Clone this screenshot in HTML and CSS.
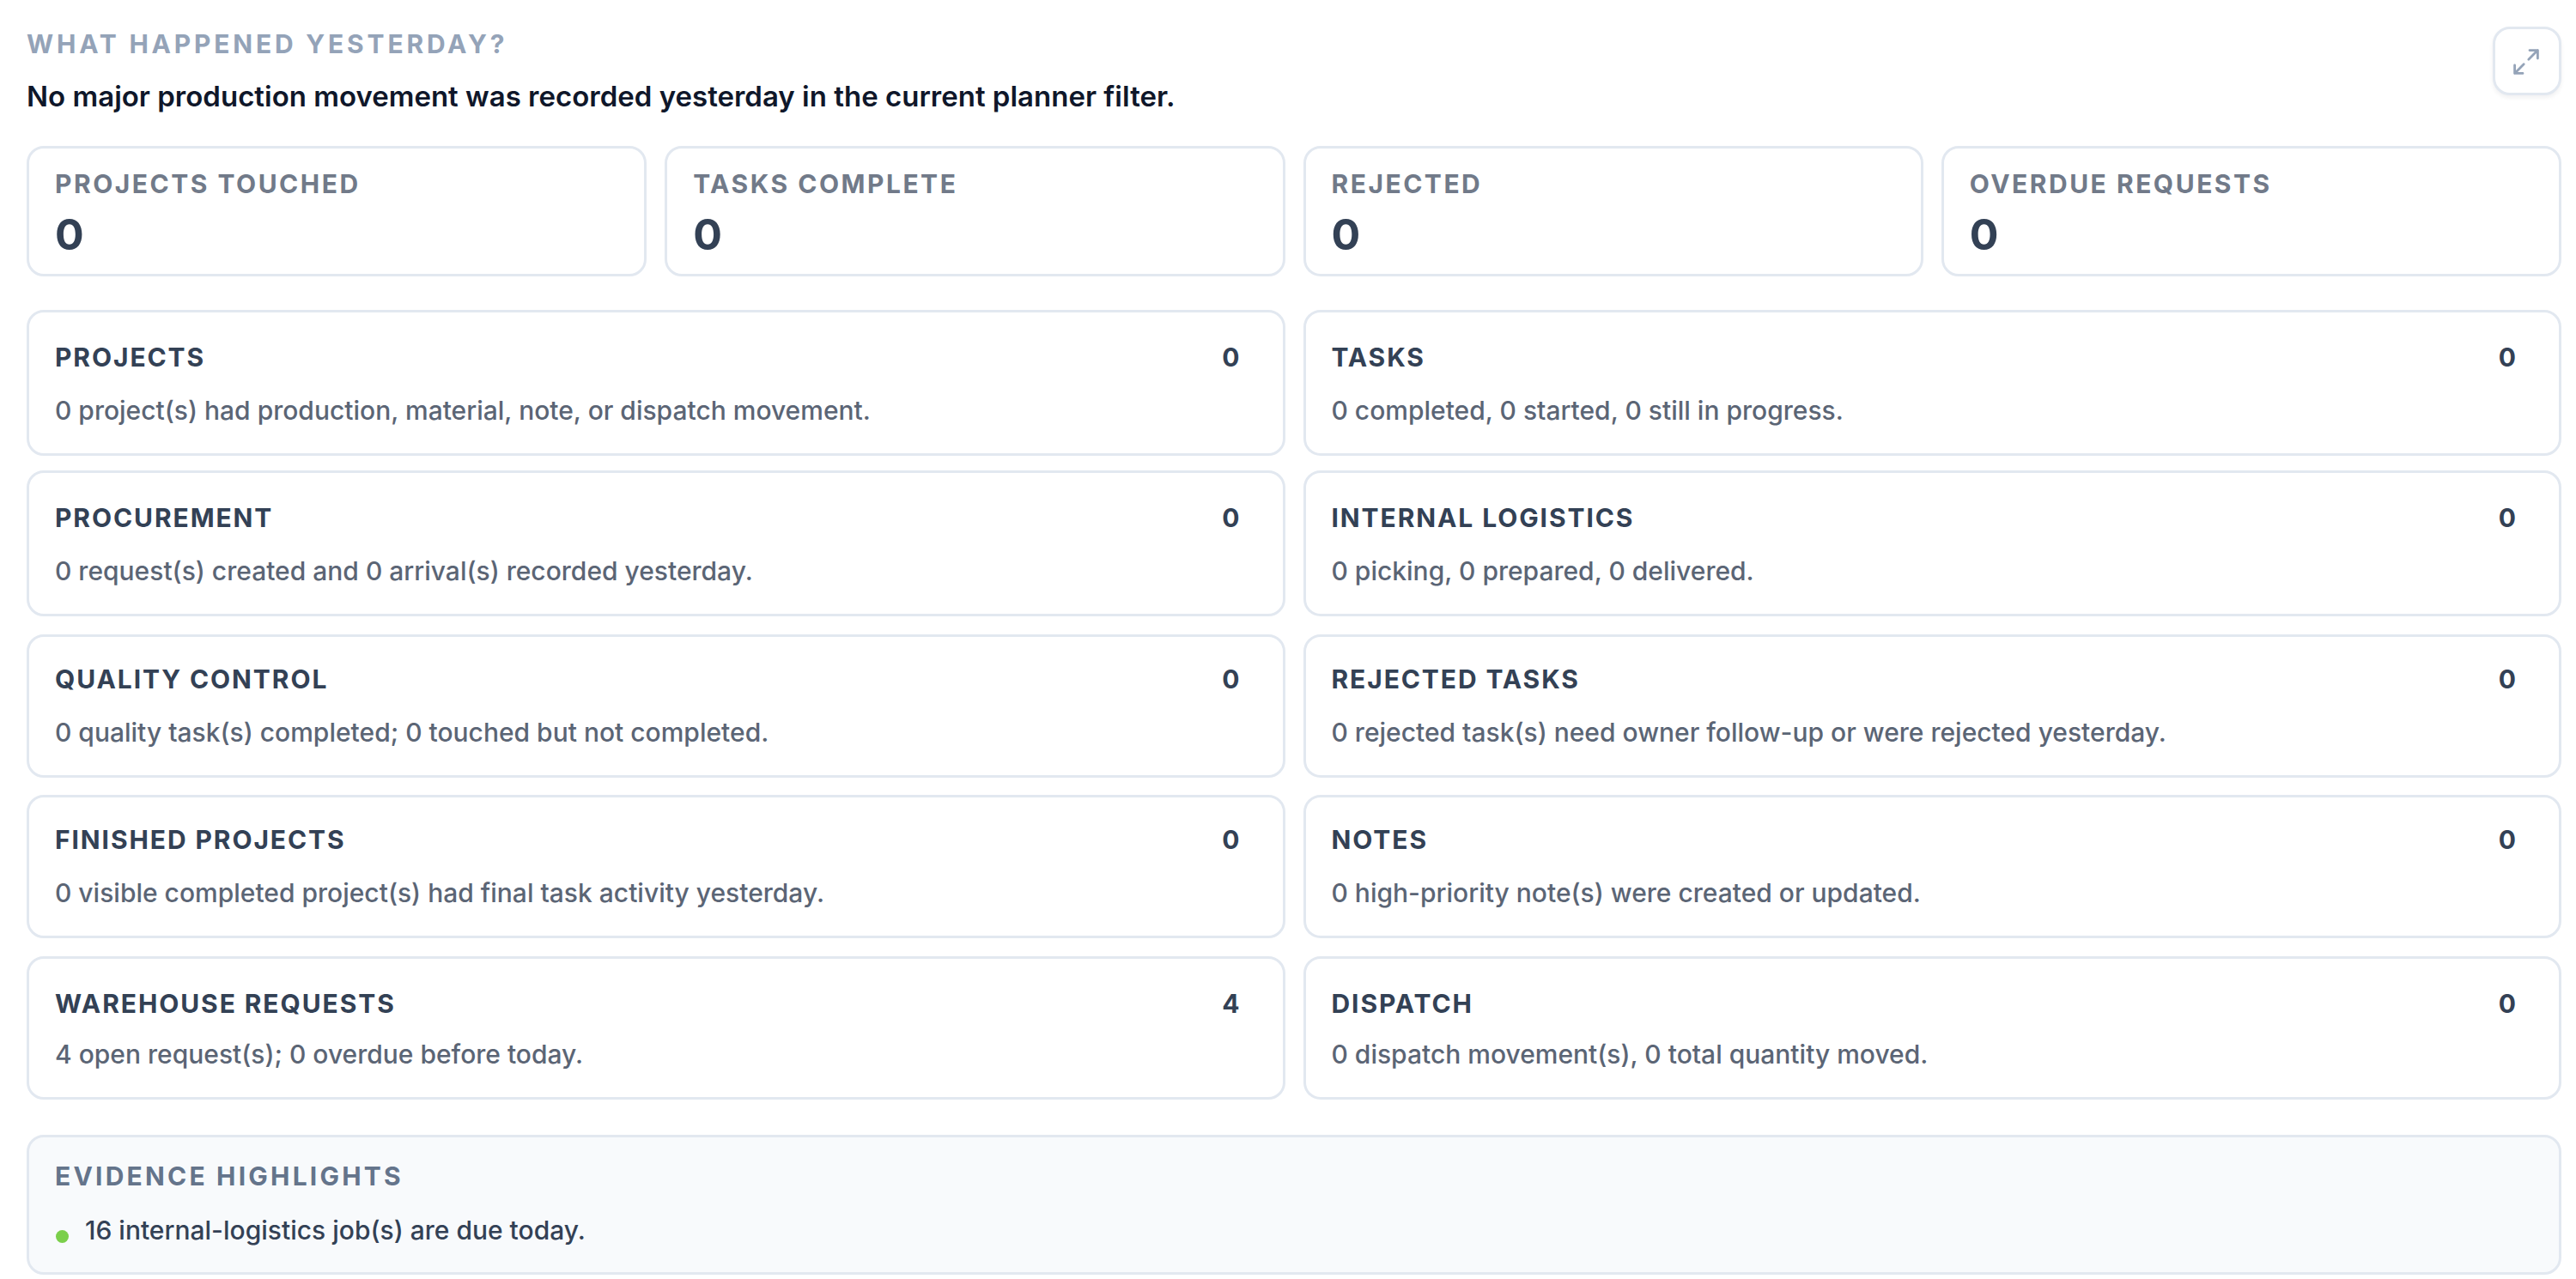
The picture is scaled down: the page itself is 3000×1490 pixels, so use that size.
FILE: index.html
```
<!DOCTYPE html>
<html lang="en">

<head>
  <meta charset="utf-8">
  <title>What happened yesterday?</title>
  <link rel="stylesheet" href="styles.css">
</head>

<body>
  <main class="summary">
    <header class="summary-header">
      <div class="summary-titles">
        <h1 class="eyebrow">What happened yesterday?</h1>
        <p class="headline">No major production movement was recorded yesterday in the current planner filter.</p>
      </div>
      <button class="expand-btn" type="button" aria-label="Expand">
        <svg class="expand-icon" viewBox="0 0 32 32">
          <path d="M18.8 13.2 29.4 2.6M20 2.6h9.4V12M13.2 18.8 2.6 29.4M2.6 20v9.4H12" />
        </svg>
      </button>
    </header>

    <section class="stats">
      <div class="stat">
        <div class="stat-label">Projects touched</div>
        <div class="stat-value">0</div>
      </div>
      <div class="stat">
        <div class="stat-label">Tasks complete</div>
        <div class="stat-value">0</div>
      </div>
      <div class="stat">
        <div class="stat-label">Rejected</div>
        <div class="stat-value">0</div>
      </div>
      <div class="stat">
        <div class="stat-label">Overdue requests</div>
        <div class="stat-value">0</div>
      </div>
    </section>

    <section class="details">
      <article class="detail">
        <div class="detail-top"><h2 class="detail-title">Projects</h2><span class="detail-count">0</span></div>
        <p class="detail-text">0 project(s) had production, material, note, or dispatch movement.</p>
      </article>
      <article class="detail">
        <div class="detail-top"><h2 class="detail-title">Tasks</h2><span class="detail-count">0</span></div>
        <p class="detail-text">0 completed, 0 started, 0 still in progress.</p>
      </article>
      <article class="detail">
        <div class="detail-top"><h2 class="detail-title">Procurement</h2><span class="detail-count">0</span></div>
        <p class="detail-text">0 request(s) created and 0 arrival(s) recorded yesterday.</p>
      </article>
      <article class="detail">
        <div class="detail-top"><h2 class="detail-title">Internal logistics</h2><span class="detail-count">0</span></div>
        <p class="detail-text">0 picking, 0 prepared, 0 delivered.</p>
      </article>
      <article class="detail">
        <div class="detail-top"><h2 class="detail-title">Quality control</h2><span class="detail-count">0</span></div>
        <p class="detail-text">0 quality task(s) completed; 0 touched but not completed.</p>
      </article>
      <article class="detail">
        <div class="detail-top"><h2 class="detail-title">Rejected tasks</h2><span class="detail-count">0</span></div>
        <p class="detail-text">0 rejected task(s) need owner follow-up or were rejected yesterday.</p>
      </article>
      <article class="detail">
        <div class="detail-top"><h2 class="detail-title">Finished projects</h2><span class="detail-count">0</span></div>
        <p class="detail-text">0 visible completed project(s) had final task activity yesterday.</p>
      </article>
      <article class="detail">
        <div class="detail-top"><h2 class="detail-title">Notes</h2><span class="detail-count">0</span></div>
        <p class="detail-text">0 high-priority note(s) were created or updated.</p>
      </article>
      <article class="detail">
        <div class="detail-top"><h2 class="detail-title">Warehouse requests</h2><span class="detail-count">4</span></div>
        <p class="detail-text">4 open request(s); 0 overdue before today.</p>
      </article>
      <article class="detail">
        <div class="detail-top"><h2 class="detail-title">Dispatch</h2><span class="detail-count">0</span></div>
        <p class="detail-text">0 dispatch movement(s), 0 total quantity moved.</p>
      </article>
    </section>

    <section class="evidence">
      <h2 class="evidence-title">Evidence highlights</h2>
      <ul class="evidence-list">
        <li class="evidence-item"><span class="dot"></span>16 internal-logistics job(s) are due today.</li>
      </ul>
    </section>
  </main>
</body>

</html>
```
FILE: styles.css
```
* {
  box-sizing: border-box;
}

body {
  margin: 0;
  background-color: #FFF;
  font-family: Inter, "Liberation Sans", sans-serif;
}

h1,
h2,
p,
ul {
  margin: 0;
  padding: 0;
}

.summary {
  padding: 31px 17px 0 31px;
}

.summary-header {
  display: flex;
  justify-content: space-between;
  height: 139px;
}

.eyebrow {
  font-size: 30px;
  line-height: 40px;
  font-weight: 700;
  letter-spacing: 3.8px;
  text-transform: uppercase;
  color: #94A3B8;
}

.headline {
  margin-top: 17px;
  font-size: 33px;
  line-height: 48px;
  font-weight: 600;
  color: #0F172A;
}

.expand-btn {
  display: flex;
  align-items: center;
  justify-content: center;
  width: 80px;
  height: 80px;
  padding: 2px 3px 0 0;
  border: 3px solid #E2E8F0;
  border-radius: 20px;
  background-color: #FFF;
  box-shadow: 0 3px 5px rgba(15, 23, 42, 0.06);
}

.expand-icon {
  width: 32px;
  height: 32px;
  fill: none;
  stroke: #94A3B8;
  stroke-width: 2.8;
  stroke-linecap: round;
  stroke-linejoin: round;
}

.stats {
  display: grid;
  grid-template-columns: repeat(4, 1fr);
  gap: 21px;
}

.stat {
  height: 152px;
  padding: 21px 30px;
  border: 3px solid #E2E8F0;
  border-radius: 20px;
}

.stat-label,
.evidence-title {
  font-size: 30px;
  line-height: 40px;
  font-weight: 700;
  text-transform: uppercase;
}

.stat-label {
  letter-spacing: 2.5px;
  color: #717A89;
}

.stat-value {
  margin-top: 13px;
  font-size: 50px;
  line-height: 52px;
  font-weight: 700;
  color: #334155;
}

.details {
  display: grid;
  grid-template-columns: 1fr 1fr;
  grid-auto-rows: 170px;
  gap: 17.5px 21px;
  margin-top: 38.5px;
}

.detail {
  padding: 31px 50px 0 30px;
  border: 3px solid #E2E8F0;
  border-radius: 20px;
}

.detail:nth-child(n+5) {
  margin-top: 3px;
  padding-top: 28px;
}

.detail:nth-child(n+9) {
  padding-top: 31px;
}

.detail-top {
  display: flex;
  justify-content: space-between;
}

.detail-title,
.detail-count {
  font-size: 30px;
  line-height: 42px;
  font-weight: 700;
  color: #334155;
}

.detail-title {
  letter-spacing: 1.9px;
  text-transform: uppercase;
}

.detail-text {
  margin-top: 20px;
  font-size: 30px;
  line-height: 42px;
  font-weight: 500;
  color: #5B6575;
}

.detail:nth-child(n+9) .detail-text {
  margin-top: 17px;
}

.evidence {
  height: 163px;
  margin-top: 41.5px;
  padding: 25px 30px;
  border: 3px solid #E2E8F0;
  border-radius: 20px;
  background-color: #F8FAFC;
}

.evidence-title {
  letter-spacing: 3.2px;
  color: #64748B;
}

.evidence-list {
  margin-top: 22px;
  list-style: none;
}

.evidence-item {
  display: flex;
  align-items: center;
  gap: 19px;
  font-size: 30px;
  line-height: 42px;
  font-weight: 500;
  color: #334155;
}

.dot {
  width: 15px;
  height: 15px;
  margin: 14px 0 0 1px;
  border-radius: 50%;
  background-color: #7BCF4B;
}
```
